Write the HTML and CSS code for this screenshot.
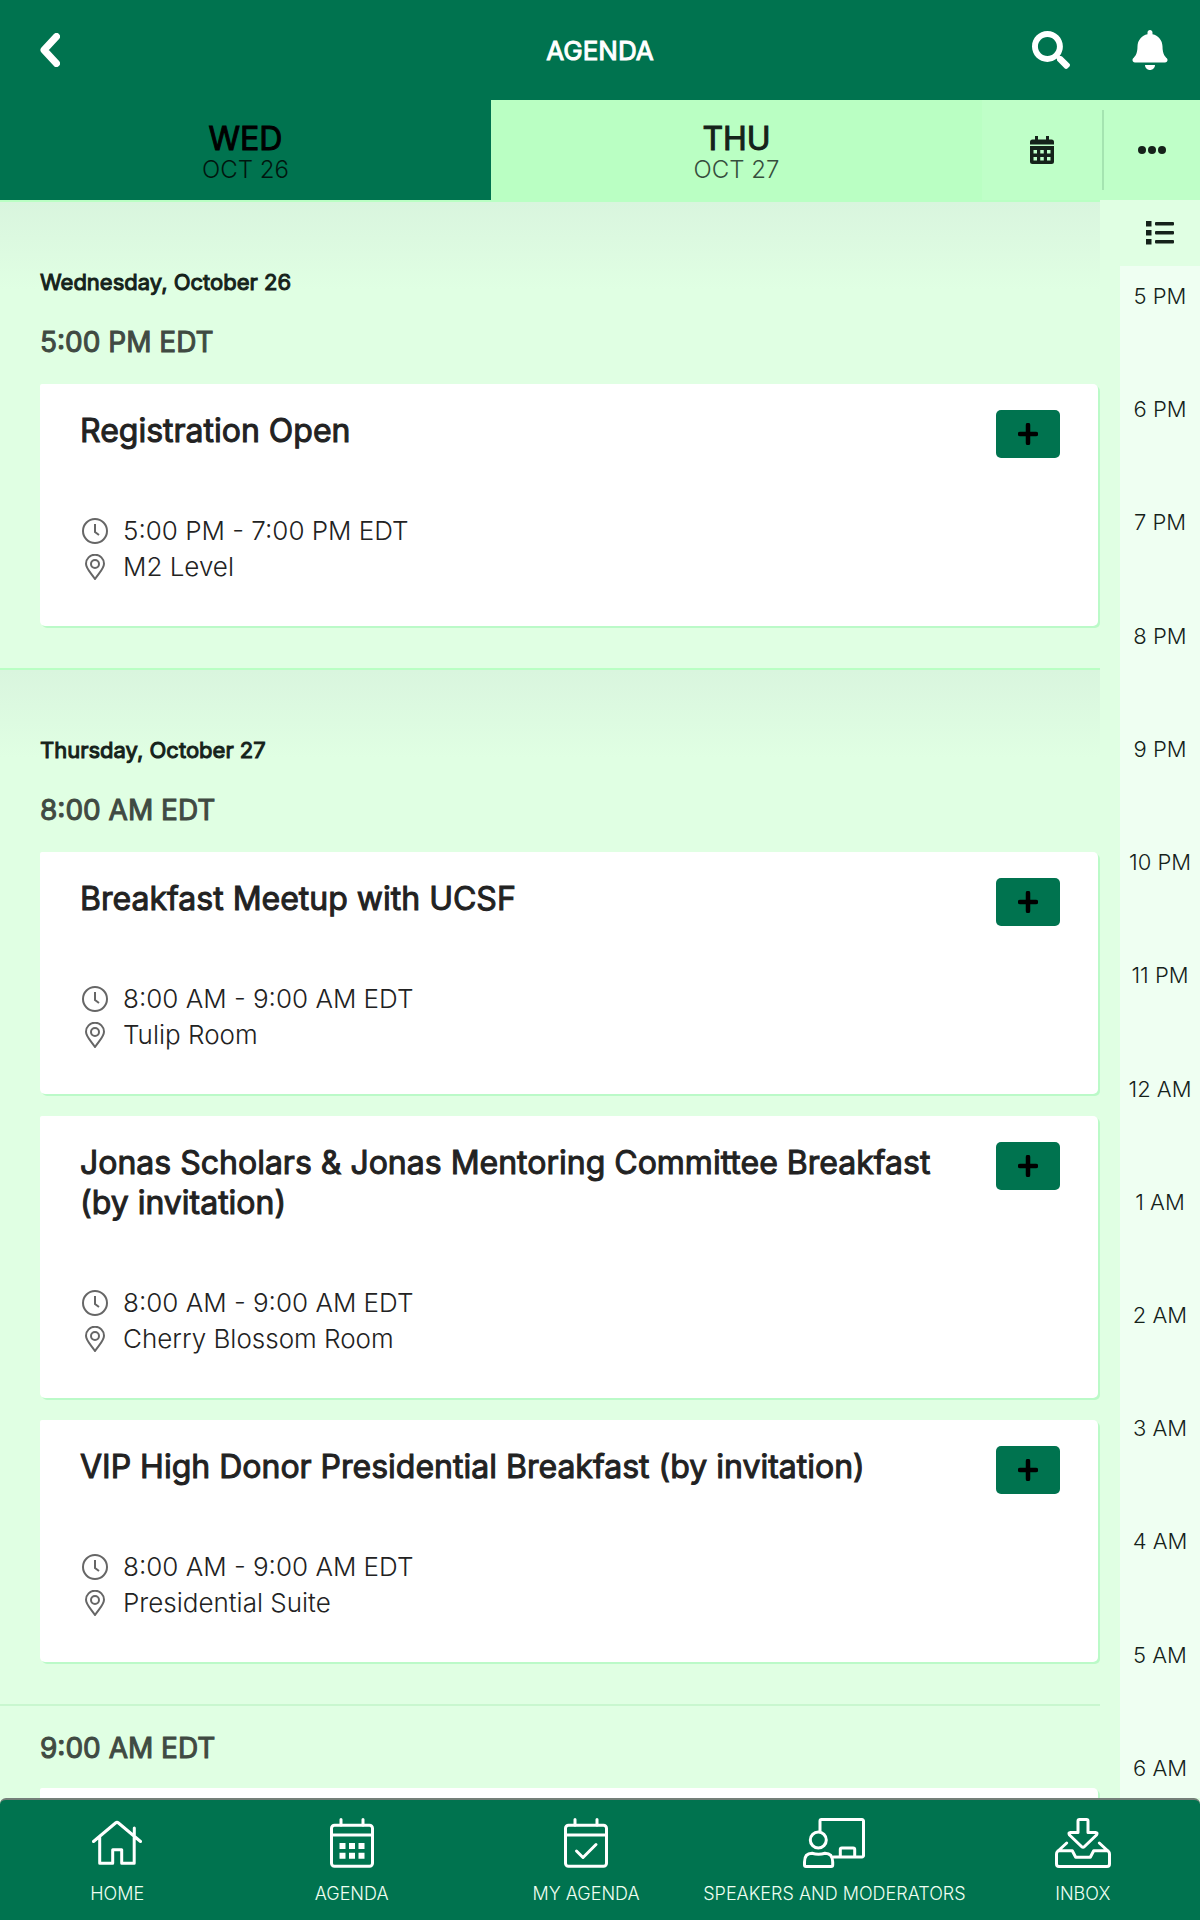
FILE: index.html
```
<!DOCTYPE html>
<html lang="en">
<head>
    <meta charset="UTF-8">
    <meta name="viewport" content="width=device-width, initial-scale=1.0">
    <title>Agenda</title>
    <link rel="stylesheet" href="styles.css">
</head>
<body>

    <!-- shared icons -->
    <svg class="sprite" aria-hidden="true">
        <symbol id="clock" viewBox="0 0 26 26">
            <circle cx="13" cy="13" r="12" />
            <path d="M13 6v8l4 3" />
        </symbol>
        <symbol id="pin" viewBox="0 0 26 26">
            <path d="M13 25C9 19 4 14.500 4 9.700A9 9 0 0 1 22 9.700C22 14.500 17 19 13 25Z" />
            <circle cx="13" cy="10" r="4" />
        </symbol>
        <symbol id="plus" viewBox="0 0 20 22">
            <path d="M10 2v18M2 11h16" />
        </symbol>
    </svg>

    <header class="topbar">
        <button class="icon-btn back" type="button" aria-label="Back">
            <svg width="20" height="34" viewBox="0 0 20 34"><path d="M16.500 3.500L4 17l12.500 13.500" fill="none" stroke="#fff" stroke-width="7" stroke-linecap="round" stroke-linejoin="round" /></svg>
        </button>
        <h1>AGENDA</h1>
        <div class="topbar-actions">
            <button class="icon-btn" type="button" aria-label="Search">
                <svg width="38" height="38" viewBox="0 0 512 512"><path fill="#fff" d="M505 442.700L405.300 343c-4.500-4.500-10.600-7-17-7H372c27.600-35.300 44-79.700 44-128C416 93.100 322.900 0 208 0S0 93.100 0 208s93.100 208 208 208c48.300 0 92.700-16.400 128-44v16.300c0 6.400 2.500 12.500 7 17l99.700 99.700c9.400 9.400 24.600 9.400 33.900 0l28.300-28.300c9.400-9.400 9.400-24.600.1-34zM208 336c-70.700 0-128-57.200-128-128 0-70.700 57.200-128 128-128 70.700 0 128 57.200 128 128 0 70.700-57.200 128-128 128z" /></svg>
            </button>
            <button class="icon-btn" type="button" aria-label="Notifications">
                <svg width="36" height="40" viewBox="0 0 448 512"><path fill="#fff" d="M224 512c35.320 0 63.970-28.650 63.970-64H160.030c0 35.350 28.650 64 63.970 64zm215.390-149.710c-19.320-20.760-55.470-51.990-55.470-154.290 0-77.700-54.480-139.900-127.940-155.160V32c0-17.670-14.320-32-31.980-32s-31.980 14.330-31.980 32v20.840C118.560 68.100 64.080 130.300 64.080 208c0 102.300-36.150 133.530-55.470 154.290-6 6.450-8.660 14.160-8.610 21.710.11 16.400 12.980 32 32.100 32h383.800c19.120 0 32-15.600 32.100-32 .05-7.550-2.610-15.270-8.610-21.710z" /></svg>
            </button>
        </div>
    </header>

    <div class="days">
        <button class="day active" type="button"><strong>WED</strong><span>OCT 26</span></button>
        <button class="day" type="button"><strong>THU</strong><span>OCT 27</span></button>
        <button class="tool tool-calendar" type="button" aria-label="Calendar">
            <svg width="24" height="28" viewBox="0 0 24 28">
                <path fill="#15221a" fill-rule="evenodd" d="M5 0h3v3.500h8V0h3v3.500h2.500A2.500 2.500 0 0 1 24 6v2.500H0V6a2.500 2.500 0 0 1 2.500-2.500H5zM0 10h24v15.500a2.500 2.500 0 0 1-2.500 2.500h-19A2.500 2.500 0 0 1 0 25.500zM3.500 14v3.500H7V14zM10.250 14v3.500h3.500V14zM17 14v3.500h3.500V14zM3.500 21v3.500H7V21zM10.250 21v3.500h3.500V21zM17 21v3.500h3.500V21z" />
            </svg>
        </button>
        <button class="tool tool-more" type="button" aria-label="More">
            <svg width="28" height="8" viewBox="0 0 28 8" fill="#15221a"><circle cx="4" cy="4" r="4" /><circle cx="14" cy="4" r="4" /><circle cx="24" cy="4" r="4" /></svg>
        </button>
    </div>

    <div class="content">
        <main class="list">
            <section class="slot new-day">
                <h2 class="date">Wednesday, October 26</h2>
                <h3 class="time">5:00 PM EDT</h3>
                <article class="card">
                    <div class="card-head">
                        <h4>Registration Open</h4>
                        <button class="add" type="button" aria-label="Add"><svg><use href="#plus" /></svg></button>
                    </div>
                    <p class="meta"><svg><use href="#clock" /></svg>5:00 PM - 7:00 PM EDT</p>
                    <p class="meta"><svg><use href="#pin" /></svg>M2 Level</p>
                </article>
            </section>

            <section class="slot new-day">
                <h2 class="date">Thursday, October 27</h2>
                <h3 class="time">8:00 AM EDT</h3>
                <article class="card">
                    <div class="card-head">
                        <h4>Breakfast Meetup with UCSF</h4>
                        <button class="add" type="button" aria-label="Add"><svg><use href="#plus" /></svg></button>
                    </div>
                    <p class="meta"><svg><use href="#clock" /></svg>8:00 AM - 9:00 AM EDT</p>
                    <p class="meta"><svg><use href="#pin" /></svg>Tulip Room</p>
                </article>
                <article class="card">
                    <div class="card-head">
                        <h4>Jonas Scholars &amp; Jonas Mentoring Committee Breakfast (by invitation)</h4>
                        <button class="add" type="button" aria-label="Add"><svg><use href="#plus" /></svg></button>
                    </div>
                    <p class="meta"><svg><use href="#clock" /></svg>8:00 AM - 9:00 AM EDT</p>
                    <p class="meta"><svg><use href="#pin" /></svg>Cherry Blossom Room</p>
                </article>
                <article class="card">
                    <div class="card-head">
                        <h4>VIP High Donor Presidential Breakfast (by invitation)</h4>
                        <button class="add" type="button" aria-label="Add"><svg><use href="#plus" /></svg></button>
                    </div>
                    <p class="meta"><svg><use href="#clock" /></svg>8:00 AM - 9:00 AM EDT</p>
                    <p class="meta"><svg><use href="#pin" /></svg>Presidential Suite</p>
                </article>
            </section>

            <section class="slot">
                <h3 class="time">9:00 AM EDT</h3>
                <article class="card card-empty"></article>
            </section>
        </main>

        <aside class="timeline">
            <button class="list-btn" type="button" aria-label="List view">
                <svg width="28" height="24" viewBox="0 0 28 24" fill="#15221a">
                    <path d="M0 0h5.500v5.500H0zM0 9h5.500v5.500H0zM0 18h5.500v5.500H0z" />
                    <rect x="9" y="1" width="19" height="3.500" rx="1" />
                    <rect x="9" y="10" width="19" height="3.500" rx="1" />
                    <rect x="9" y="19" width="19" height="3.500" rx="1" />
                </svg>
            </button>
            <ol class="hours">
                <li>5 PM</li>
                <li>6 PM</li>
                <li>7 PM</li>
                <li>8 PM</li>
                <li>9 PM</li>
                <li>10 PM</li>
                <li>11 PM</li>
                <li>12 AM</li>
                <li>1 AM</li>
                <li>2 AM</li>
                <li>3 AM</li>
                <li>4 AM</li>
                <li>5 AM</li>
                <li>6 AM</li>
            </ol>
        </aside>
    </div>

    <nav class="tabbar">
        <a href="#home">
            <svg width="50" height="50" viewBox="0 0 50 50">
                <path d="M1.500 23.500L23.500 5q1.500-1.200 3 0L48.500 23.500M7.700 19v26.300h13V31.700h9v13.600h12.500V19M42.300 17V10" />
            </svg>
            HOME
        </a>
        <a href="#agenda">
            <svg width="44" height="50" viewBox="0 0 44 50">
                <rect x="1.500" y="7.300" width="41" height="41" rx="3" />
                <path d="M1.500 17h41M11 7V1.500M33 7V1.500" />
                <path class="solid" d="M9.500 25h6v6h-6zM19 25h6v6h-6zM28.500 25h6v6h-6zM9.500 34.700h6v6h-6zM19 34.700h6v6h-6zM28.500 34.700h6v6h-6z" />
            </svg>
            AGENDA
        </a>
        <a href="#my-agenda">
            <svg width="44" height="50" viewBox="0 0 44 50">
                <rect x="1.500" y="7.300" width="41" height="41" rx="3" />
                <path d="M1.500 17h41M11 7V1.500M33 7V1.500M12.500 33l6.500 6.500L32 26.500" />
            </svg>
            MY AGENDA
        </a>
        <a href="#speakers">
            <svg width="62" height="50" viewBox="0 0 62 50">
                <path d="M17 13V3a1.500 1.500 0 0 1 1.500-1.500h40.500a1.500 1.500 0 0 1 1.500 1.500v34.500a1.500 1.500 0 0 1-1.500 1.500H30.500M37.300 39V31.500q0-1.500 1.500-1.500h11.400q1.500 0 1.500 1.500V39" />
                <circle cx="15.300" cy="22" r="8" />
                <path d="M1.500 47V44C1.500 38.500 4 35.300 9 35.300q6.500 2 13 0c5 0 7.700 3.200 7.700 8.700v3q0 1.500-1.500 1.500H3q-1.500 0-1.500-1.500z" />
            </svg>
            SPEAKERS AND MODERATORS
        </a>
        <a href="#inbox">
            <svg width="56" height="50" viewBox="0 0 56 50">
                <path d="M24.500 1.500h7q1.500 0 1.500 1.500v11.500h7.500q2.500 0 1 2.500L29.500 28.500q-1.500 1.500-3 0L14.500 17q-1.500-2.500 1-2.500H23V3q0-1.500 1.500-1.500z" />
                <path d="M11.700 25L2.500 33.500q-1 1-1 2.500V46q0 2.500 2.500 2.500h48q2.500 0 2.500-2.500V36q0-1.500-1-2.500L44.300 25M3 32.700h14.300l3.400 6.600h14.600l3.400-6.600H53" />
            </svg>
            INBOX
        </a>
    </nav>

</body>
</html>
```
FILE: styles.css
```
* {
    box-sizing: border-box;
    margin: 0;
    padding: 0;
}

body {
    display: flex;
    flex-direction: column;
    height: 100vh;
    font-family: Inter, "Liberation Sans", sans-serif;
    font-weight: 350;
    background-color: #e0ffe3;
    color: #15221a;
}

h1, h2, h3, h4, strong {
    font-weight: 400;
    -webkit-text-stroke: 1px currentColor;
}

button {
    border: none;
    background: none;
    font: inherit;
    color: inherit;
    cursor: pointer;
}

svg {
    display: block;
    flex-shrink: 0;
}

.sprite {
    display: none;
}

/* top bar */
.topbar {
    display: grid;
    grid-template-columns: 1fr auto 1fr;
    align-items: center;
    height: 100px;
    flex-shrink: 0;
    padding: 0 32px;
    background-color: #00734f;
    color: #fff;
}

.topbar h1 {
    font-size: 26px;
}

.topbar-actions {
    display: flex;
    align-items: center;
    justify-content: flex-end;
    gap: 62px;
}

.icon-btn {
    justify-self: start;
}

.back {
    padding: 8px;
}

/* day tabs */
.days {
    display: flex;
    height: 100px;
    flex-shrink: 0;
    background-color: #bfffc8;
}

.day {
    display: flex;
    flex: 1;
    flex-direction: column;
    align-items: center;
    justify-content: center;
    padding-top: 8px;
    background-color: #baffc3;
}

.day strong {
    font-size: 32px;
    line-height: 32px;
}

.day span {
    font-size: 24px;
    line-height: 30px;
    opacity: 0.8;
}

.day.active {
    background-color: #00734f;
    color: #000;
}

.tool {
    display: flex;
    align-items: center;
    justify-content: center;
}

.tool-calendar {
    width: 120px;
}

.tool-more {
    width: 98px;
    height: 80px;
    align-self: center;
    border-left: 2px solid #a5e4b1;
}

/* agenda list */
.content {
    display: flex;
    flex: 1;
    min-height: 0;
}

.list {
    flex: 1;
    overflow: hidden;
}

.slot {
    padding: 24px 0 42px;
    border-top: 2px solid #c9f7cf;
}

.new-day {
    padding-top: 66px;
    border-color: #b9ffc3;
    background: linear-gradient(#d9f5de, #e0ffe3 88px);
}

.date {
    margin: 0 0 28px 40px;
    font-size: 22px;
    line-height: 28px;
}

.time {
    margin: 0 0 22px 40px;
    font-size: 28px;
    line-height: 36px;
    color: #404a42;
}

.new-day .time {
    margin-bottom: 24px;
}

.card {
    margin: 0 2px 0 40px;
    padding: 26px 38px 41px 40px;
    border-radius: 2px 5px 5px 5px;
    background-color: #fff;
    box-shadow: 2px 2px 0 #bbfac8;
    color: #222;
}

.card + .card {
    margin-top: 22px;
}

.card-empty {
    min-height: 242px;
}

.card-head {
    display: flex;
    align-items: flex-start;
    gap: 40px;
    margin-bottom: 62px;
}

.card-head h4 {
    flex: 1;
    padding-top: 1px;
    font-size: 32px;
    line-height: 40px;
}

.add {
    display: flex;
    align-items: center;
    justify-content: center;
    width: 64px;
    height: 48px;
    margin-bottom: -8px;
    border-radius: 5px;
    background-color: #00734f;
}

.add svg {
    width: 20px;
    height: 22px;
    stroke: #000;
    stroke-width: 4.500;
    stroke-linecap: round;
}

.meta {
    display: flex;
    align-items: center;
    gap: 15px;
    padding-left: 2px;
    font-size: 26px;
    line-height: 36px;
}

.meta svg {
    width: 26px;
    height: 26px;
    fill: none;
    stroke: #666;
    stroke-width: 2;
}

/* hour scale */
.timeline {
    display: flex;
    flex-direction: column;
    width: 80px;
    margin-left: 20px;
}

.list-btn {
    display: flex;
    align-items: center;
    justify-content: center;
    height: 66px;
    flex-shrink: 0;
}

.hours {
    display: flex;
    flex: 1;
    flex-direction: column;
    justify-content: space-between;
    padding: 16px 0;
    background-color: #effff2;
    list-style: none;
    font-size: 22px;
    line-height: 28px;
    text-align: center;
}

/* bottom navigation */
.tabbar {
    display: flex;
    height: 122px;
    flex-shrink: 0;
    border-top: 2px solid #747f79;
    border-radius: 6px 6px 0 0;
    background-color: #00734f;
}

.tabbar a {
    display: flex;
    flex: 1;
    flex-direction: column;
    align-items: center;
    gap: 15px;
    padding-top: 18px;
    font-size: 18px;
    line-height: 22px;
    color: #effff2;
    text-decoration: none;
    white-space: nowrap;
}

.tabbar svg {
    fill: none;
    stroke: #fff;
    stroke-width: 3;
    stroke-linecap: round;
    stroke-linejoin: round;
}

.tabbar .solid {
    fill: #fff;
    stroke: none;
}
```
